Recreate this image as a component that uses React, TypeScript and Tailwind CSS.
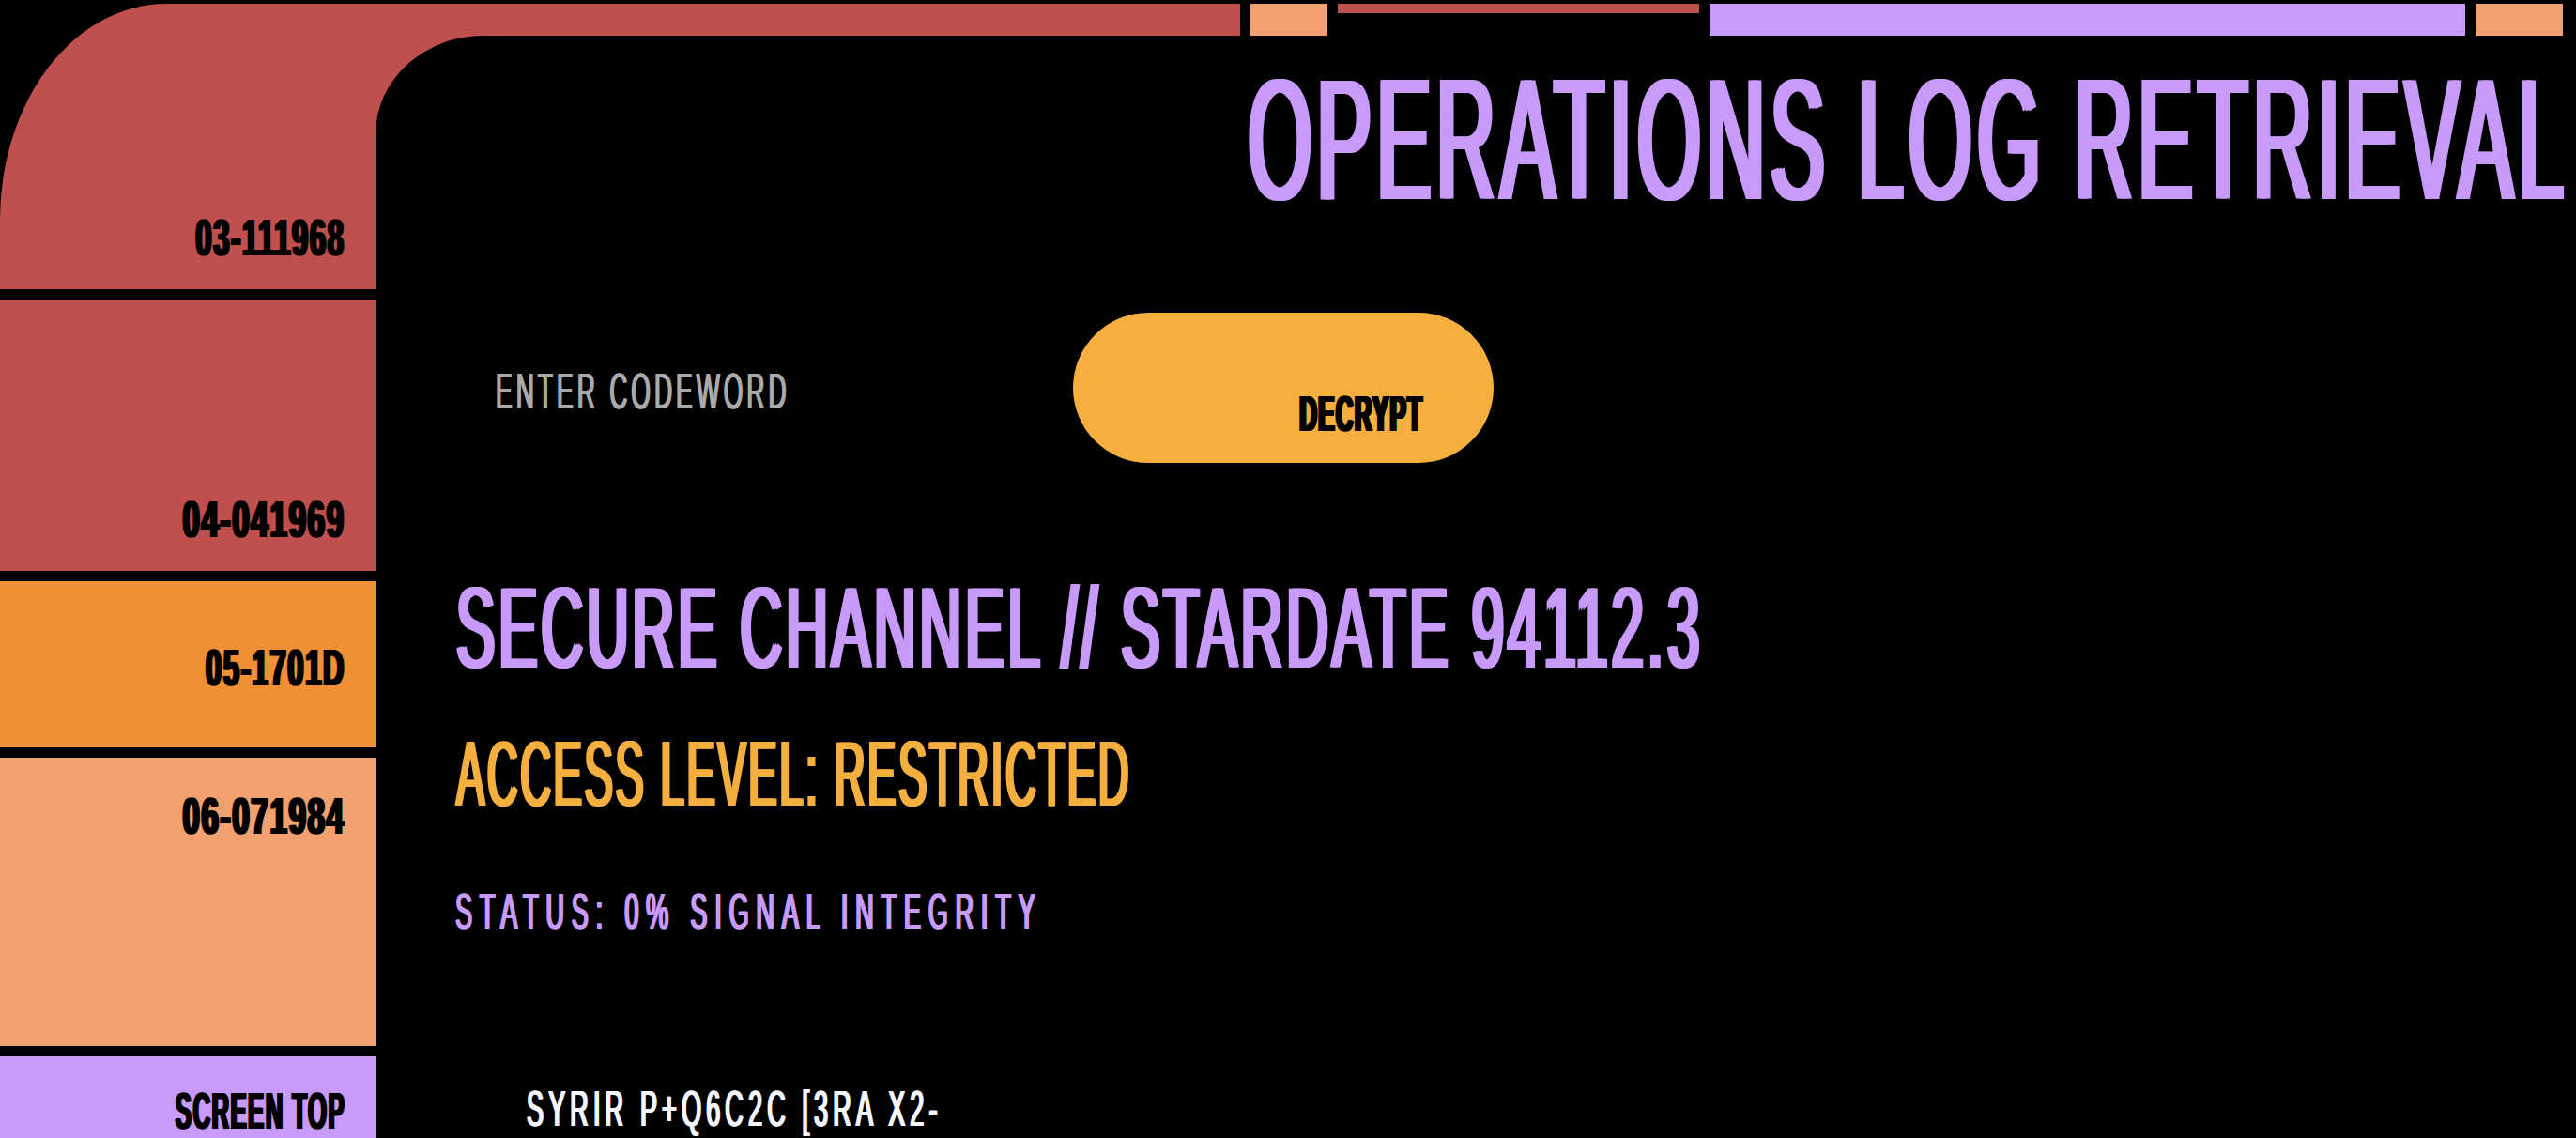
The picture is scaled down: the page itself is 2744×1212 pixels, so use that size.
import React from "react";

function SideLabel({ children, scale }: { children: React.ReactNode; scale: string }) {
  return (
    <span
      className={`shrink-0 whitespace-nowrap text-[56px] leading-none font-bold tracking-[3px] text-black origin-right [text-shadow:2.7px_0_0_currentColor,-2.7px_0_0_currentColor] ${scale}`}
    >
      {children}
    </span>
  );
}

export default function App() {
  return (
    <div className="flex h-[1212px] w-full overflow-hidden bg-black pt-[4px] pr-[14px] font-['Liberation_Sans',Arial,sans-serif]">
      {/* Sidebar */}
      <div className="flex w-[400px] shrink-0 flex-col gap-[11px]">
        <div className="flex h-[304px] shrink-0 items-end justify-end rounded-tl-[177px_230px] bg-[#c0504d] pr-[32px] pb-[27px]">
          <SideLabel scale="scale-x-[0.552]">03-111968</SideLabel>
        </div>
        <div className="flex h-[289px] shrink-0 items-end justify-end bg-[#c0504d] pr-[32px] pb-[27px]">
          <SideLabel scale="scale-x-[0.588]">04-041969</SideLabel>
        </div>
        <div className="flex h-[177px] shrink-0 items-start justify-end bg-[#f08f35] pr-[32px] pt-[64px]">
          <SideLabel scale="scale-x-[0.552]">05-1701D</SideLabel>
        </div>
        <div className="flex h-[307px] shrink-0 items-start justify-end bg-[#f1a170] pr-[32px] pt-[34px]">
          <SideLabel scale="scale-x-[0.588]">06-071984</SideLabel>
        </div>
        <div className="flex h-[200px] shrink-0 items-start justify-end bg-[#c89bfa] pr-[32px] pt-[30px]">
          <SideLabel scale="scale-x-[0.461]">SCREEN TOP</SideLabel>
        </div>
      </div>

      {/* Main column */}
      <div className="flex min-w-0 flex-1 flex-col">
        {/* Top bar */}
        <div className="flex h-[34px] shrink-0 items-start gap-[11px]">
          <div className="h-[34px] w-[921px] shrink-0 bg-[#c0504d]" />
          <div className="h-[34px] w-[82px] shrink-0 bg-[#f1a170]" />
          <div className="h-[10px] w-[385px] shrink-0 bg-[#c0504d]" />
          <div className="h-[34px] flex-1 bg-[#c89bfa]" />
          <div className="h-[34px] w-[93px] shrink-0 bg-[#f1a170]" />
        </div>

        {/* Inner elbow corner + title */}
        <div className="flex shrink-0 items-start">
          <div className="h-[105px] w-[115px] shrink-0 bg-[#c0504d]">
            <div className="h-full w-full rounded-tl-[115px_105px] bg-black" />
          </div>
          <div className="flex min-w-0 flex-1 justify-end pt-[18px]">
            <h1 className="-mr-[6px] shrink-0 whitespace-nowrap text-[184px] leading-none tracking-[12px] text-[#c89bfa] origin-right scale-x-[0.472] [text-shadow:7px_0_0_currentColor,-7px_0_0_currentColor]">
              OPERATIONS LOG RETRIEVAL
            </h1>
          </div>
        </div>

        {/* Codeword row */}
        <div className="mt-[93px] flex shrink-0 items-start pl-[128px]">
          <div className="w-[615px] shrink-0 pt-[57px]">
            <div className="whitespace-nowrap text-[53px] leading-none tracking-[8px] text-[#aaaaaa] origin-left scale-x-[0.5] [text-shadow:1.5px_0_0_currentColor,-1.5px_0_0_currentColor]">
              ENTER CODEWORD
            </div>
          </div>
          <button className="flex h-[160px] w-[448px] shrink-0 items-end justify-end rounded-full bg-[#f4af3f] pr-[75px] pb-[26px]">
            <span className="shrink-0 whitespace-nowrap text-[53px] leading-none font-bold tracking-[3px] text-black origin-right scale-x-[0.485] [text-shadow:3.5px_0_0_currentColor,-3.5px_0_0_currentColor]">
              DECRYPT
            </span>
          </button>
        </div>

        {/* Headings */}
        <div className="mt-[114px] flex shrink-0 flex-col pl-[84px]">
          <h2 className="ml-[2px] whitespace-nowrap text-[123px] leading-none tracking-[8px] text-[#c89bfa] origin-left scale-x-[0.502] [text-shadow:5px_0_0_currentColor,-5px_0_0_currentColor]">
            SECURE CHANNEL // STARDATE 94112.3
          </h2>
          <h3 className="mt-[45px] ml-[2px] whitespace-nowrap text-[98px] leading-none tracking-[6px] text-[#f4af3f] origin-left scale-x-[0.461] [text-shadow:4px_0_0_currentColor,-4px_0_0_currentColor]">
            ACCESS LEVEL: RESTRICTED
          </h3>
          <div className="mt-[70px] ml-[1px] whitespace-nowrap text-[54px] leading-none tracking-[15.7px] text-[#c89bfa] origin-left scale-x-[0.5] [text-shadow:2.2px_0_0_currentColor,-2.2px_0_0_currentColor]">
            STATUS: 0% SIGNAL INTEGRITY
          </div>
        </div>

        <div className="mt-[156px] shrink-0 pl-[161px]">
          <div className="whitespace-nowrap text-[54px] leading-none tracking-[10.3px] text-[#f6f6ff] origin-left scale-x-[0.5] [text-shadow:2px_0_0_currentColor,-2px_0_0_currentColor]">
            SYRIR P+Q6C2C [3RA X2-
          </div>
        </div>
      </div>
    </div>
  );
}
